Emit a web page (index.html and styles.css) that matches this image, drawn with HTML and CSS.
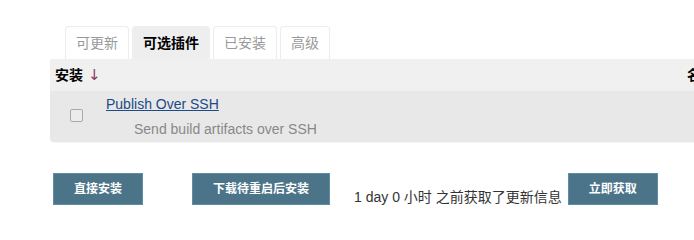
FILE: index.html
```html
<!DOCTYPE html>
<html lang="zh">
<head>
<meta charset="utf-8">
<title>插件管理</title>
<link rel="stylesheet" href="styles.css">
</head>
<body>
<div class="page">
  <div class="tabs">
    <div class="tab">可更新</div>
    <div class="tab active">可选插件</div>
    <div class="tab">已安装</div>
    <div class="tab">高级</div>
  </div>
  <div class="table">
    <div class="thead">
      <div class="th th-install">安装 <span class="arrow">↓</span></div>
      <div class="th th-name">名称</div>
    </div>
    <div class="row">
      <div class="cell-check"><span class="checkbox"></span></div>
      <div class="cell-name">
        <a class="plugin-link" href="#">Publish Over SSH</a>
        <div class="desc">Send build artifacts over SSH</div>
      </div>
    </div>
  </div>
  <div class="actions">
    <button class="btn btn-first">直接安装</button>
    <button class="btn btn-second">下载待重启后安装</button>
    <span class="info">1 day 0 小时 之前获取了更新信息</span>
    <button class="btn btn-third">立即获取</button>
  </div>
</div>
</body>
</html>
```

FILE: styles.css
```css
html, body {
  margin: 0;
  padding: 0;
  overflow: hidden;
  background: #fff;
}
body {
  font-family: "Liberation Sans", Arial, "Noto Sans CJK SC", sans-serif;
  font-size: 14px;
  color: #333;
}
.page {
  width: 1400px;
  padding: 26px 0 0 50px;
}
.tabs {
  display: flex;
  gap: 3px;
  margin-left: 15px;
}
.tab {
  border: 1px solid #ececec;
  border-bottom: none;
  border-radius: 4px 4px 0 0;
  padding: 6px 10px 6px 10px;
  line-height: 20px;
  color: #999;
}
.tab.active {
  background: #eeeeee;
  border-color: #eeeeee;
  color: #000;
  font-weight: bold;
}
.table {
  width: 1350px;
  border-radius: 0 0 0 4px;
  overflow: hidden;
  box-shadow: 0 1px 1px rgba(0,0,0,0.04);
}
.thead {
  display: flex;
  background: #f0f0f0;
  height: 32px;
  align-items: center;
}
.th {
  font-weight: bold;
  color: #000;
  line-height: 20px;
}
.th-install {
  width: 48px;
  padding-left: 5px;
  white-space: nowrap;
}
.arrow {
  font-family: "DejaVu Sans", sans-serif;
  font-size: 15px;
  color: #8e3a5e;
  font-weight: normal;
  margin-left: 1px;
}
.th-name {
  padding-left: 584px;
}
.row {
  display: flex;
  background: #e8e8e8;
  height: 51px;
}
.cell-check {
  width: 53px;
  display: flex;
  align-items: center;
  justify-content: center;
}
.checkbox {
  width: 11px;
  height: 11px;
  border: 1px solid #a9a9a9;
  border-radius: 2px;
  background: #ececec;
  margin-top: -2px;
}
.cell-name {
  padding: 3px 0 0 3px;
}
.plugin-link {
  color: #204a87;
  text-decoration: underline;
  line-height: 20px;
  display: inline-block;
}
.desc {
  color: #888;
  padding-left: 28px;
  line-height: 20px;
  margin-top: 5px;
}
.actions {
  display: flex;
  align-items: flex-start;
  margin-top: 31px;
  padding-left: 3px;
}
.btn {
  font-family: "Liberation Sans", Arial, "Noto Sans CJK SC", sans-serif;
  font-size: 12px;
  font-weight: bold;
  color: #fff;
  background: #4b7489;
  border: 1px solid #5e8ea4;
  height: 32px;
  padding: 0 20px;
  line-height: 30px;
  margin: 0;
  border-radius: 0;
}
.btn-first {
  width: 90px;
}
.btn-second {
  margin-left: 49px;
}
.info {
  margin-left: 24px;
  margin-top: 14px;
  line-height: 20px;
  color: #333;
}
.btn-third {
  margin-left: 6px;
  width: 90px;
}
```
